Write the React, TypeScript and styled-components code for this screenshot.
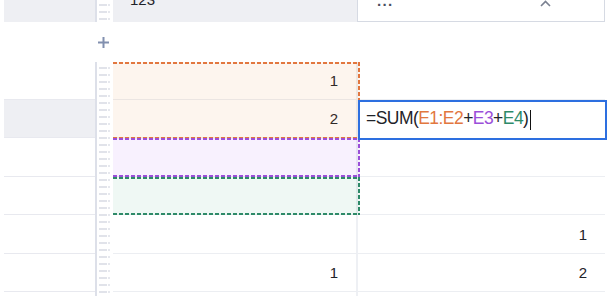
import React from 'react';
import styled, { createGlobalStyle, css } from 'styled-components';

const Global = createGlobalStyle`
  html, body { margin: 0; padding: 0; background: #fff; overflow: hidden; }
  body { font-family: "Liberation Sans", Arial, sans-serif; color: #1f2329; }
`;

const Sheet = styled.div`
  width: 613px;
  height: 296px;
  overflow: hidden;
`;

const Scroller = styled.div`
  margin-top: -18px;
  padding-left: 4px;
  display: flex;
  flex-direction: column;
`;

const Row = styled.div<{ $h: number }>`
  display: flex;
  height: ${(p) => p.$h}px;
`;

const LeftCell = styled.div<{ $shade?: boolean; $line?: boolean }>`
  box-sizing: border-box;
  width: 91px;
  flex: none;
  background: ${(p) => (p.$shade ? '#eeeff3' : '#fff')};
  border-bottom: ${(p) => (p.$line ? '1px solid #e8e9ef' : 'none')};
`;

const Grip = styled.div<{ $show?: boolean }>`
  box-sizing: border-box;
  width: 18px;
  flex: none;
  ${(p) =>
    p.$show &&
    css`
      border-left: 2px solid #dde0e9;
      background-image:
        repeating-linear-gradient(to bottom, #e1e3ea 0 2px, transparent 2px 7px),
        repeating-linear-gradient(to bottom, #e6e8ee 0 2px, transparent 2px 7px);
      background-size: 8px 100%, 2px 100%;
      background-position: 99px 4px, 108px 4px;
      background-repeat: no-repeat;
      background-attachment: fixed;
    `}
`;

const AddCell = styled.div`
  width: 18px;
  flex: none;
  display: flex;
  align-items: center;
  justify-content: center;
  padding-right: 1px;
  box-sizing: border-box;
`;

const ECell = styled.div<{ $shade?: boolean; $line?: boolean; $align?: 'left' | 'right' }>`
  box-sizing: border-box;
  width: 245px;
  flex: none;
  display: flex;
  align-items: center;
  justify-content: ${(p) => (p.$align === 'left' ? 'flex-start' : 'flex-end')};
  padding: ${(p) => (p.$align === 'left' ? '0 0 5px 17px' : '0 18px 0 0')};
  font-size: 15px;
  color: #1f2329;
  background: ${(p) => (p.$shade ? '#eeeff3' : '#fff')};
  border-bottom: ${(p) => (p.$line ? '1px solid #eceef2' : 'none')};
  border-right: ${(p) => (p.$line ? '2px solid #eef0f4' : 'none')};
`;

const FCell = styled.div<{ $line?: boolean }>`
  box-sizing: border-box;
  width: 247px;
  flex: none;
  display: flex;
  align-items: center;
  justify-content: flex-end;
  padding-right: 18px;
  font-size: 15px;
  color: #1f2329;
  border-bottom: ${(p) => (p.$line ? '1px solid #eceef2' : 'none')};
`;

const Picker = styled.div`
  box-sizing: border-box;
  width: 248px;
  flex: none;
  margin-left: -1px;
  display: flex;
  align-items: center;
  padding: 6px 0 0 19px;
  background: #fff;
  border: 1px solid #d6dae3;
  border-top: none;
  font-size: 15px;
  color: #4a5060;
`;

const Ellipsis = styled.span`
  letter-spacing: 0.5px;
  font-weight: bold;
  line-height: 1;
`;

const Chevron = styled.svg`
  margin-left: 146px;
  margin-top: -3px;
`;

const DataArea = styled.div`
  position: relative;
  display: flex;
  flex-direction: column;
`;

const dashed = (c: string) => css`
  background-image:
    repeating-linear-gradient(to right, ${c} 0 4px, transparent 4px 6px),
    repeating-linear-gradient(to right, ${c} 0 4px, transparent 4px 6px),
    repeating-linear-gradient(to bottom, ${c} 0 4px, transparent 4px 6px);
  background-size: 100% 2px, 100% 2px, 2px 100%;
  background-position: 0 0, 0 100%, 100% 0;
  background-repeat: no-repeat;
`;

const Range = styled.div<{ $color: string; $fill: string }>`
  position: absolute;
  left: 109px;
  width: 247px;
  pointer-events: none;
  background-color: ${(p) => p.$fill};
  ${(p) => dashed(p.$color)}
`;

const Editor = styled.div`
  position: absolute;
  left: 354px;
  top: 38px;
  width: 249px;
  height: 40px;
  box-sizing: border-box;
  border: 2px solid #2d6fe0;
  background: #fff;
  display: flex;
  align-items: center;
  padding: 0 0 4px 6px;
  font-size: 17.5px;
  letter-spacing: -0.55px;
  color: #1f2329;
  z-index: 2;
`;

const Ref = styled.span<{ $c: string }>`
  color: ${(p) => p.$c};
`;

const Caret = styled.span`
  display: inline-block;
  width: 1.5px;
  height: 20px;
  margin-left: 1.5px;
  margin-top: 4px;
  background: #111;
`;

const ORANGE = '#e2773f';
const PURPLE = '#9b4fd9';
const GREEN = '#2e8a68';

const rows = [
  { h: 38, shade: false, e: '1', f: '' },
  { h: 38, shade: true, e: '2', f: '' },
  { h: 39, shade: false, e: '', f: '' },
  { h: 38, shade: false, e: '', f: '' },
  { h: 39, shade: false, e: '', f: '1' },
  { h: 38, shade: false, e: '1', f: '2' },
  { h: 38, shade: false, e: '', f: '' },
];

export default function App() {
  return (
    <Sheet>
      <Global />
      <Scroller>
        <Row $h={40}>
          <LeftCell $shade />
          <Grip $show />
          <ECell $shade $align="left">123</ECell>
          <Picker>
            <Ellipsis>···</Ellipsis>
            <Chevron width="11" height="7" viewBox="0 0 11 7">
              <polyline points="1,6 5.5,1.5 10,6" fill="none" stroke="#7a8090" strokeWidth="1.6" />
            </Chevron>
          </Picker>
        </Row>
        <Row $h={40}>
          <LeftCell />
          <AddCell>
            <svg width="13" height="13" viewBox="0 0 13 13">
              <path d="M6.5 1v11M1 6.5h11" stroke="#8290af" strokeWidth="2" fill="none" />
            </svg>
          </AddCell>
        </Row>
        <DataArea>
          {rows.map((r, i) => (
            <Row key={i} $h={r.h}>
              <LeftCell $shade={r.shade} $line />
              <Grip $show />
              <ECell $line>{r.e}</ECell>
              <FCell $line>{r.f}</FCell>
            </Row>
          ))}
          <Range $color={ORANGE} $fill="rgba(230,130,42,0.08)" style={{ top: 0, height: 77 }} />
          <Range $color={PURPLE} $fill="rgba(168,80,242,0.08)" style={{ top: 76, height: 39 }} />
          <Range $color={GREEN} $fill="rgba(55,167,117,0.08)" style={{ top: 115, height: 38 }} />
          <Editor>
            =SUM(<Ref $c={ORANGE}>E1:E2</Ref>+<Ref $c={PURPLE}>E3</Ref>+<Ref $c={GREEN}>E4</Ref>)
            <Caret />
          </Editor>
        </DataArea>
      </Scroller>
    </Sheet>
  );
}
